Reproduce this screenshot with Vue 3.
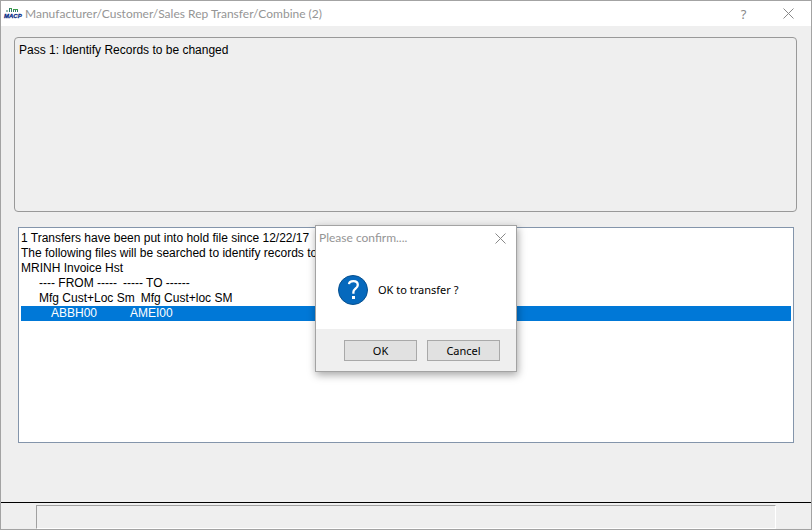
<template>
  <div class="window">
    <header class="titlebar">
      <svg class="logo" viewBox="0 0 16 12" aria-hidden="true">
        <path d="M2 3h2M5.5 0v4M7.5 1v3M9.5 1v3M11.5 1v3M13.5 1v3" stroke="#2f7a66" fill="none" />
        <path d="M6 0.5h2M9 1.5h5" stroke="#3a9c49" fill="none" />
        <text x="0" y="10">MACP</text>
      </svg>
      <h1 class="title">Manufacturer/Customer/Sales Rep Transfer/Combine (2)</h1>
      <button class="title-btn" type="button" aria-label="Help">?</button>
      <button class="title-btn" type="button" aria-label="Close">
        <svg width="11" height="11" viewBox="0 0 11 11">
          <path d="M0.5 0.5l10 10M10.5 0.5l-10 10" />
        </svg>
      </button>
    </header>

    <main class="content">
      <section class="pass-panel">Pass 1: Identify Records to be changed</section>

      <ul class="record-list" role="listbox" aria-label="Transfers">
        <li
          v-for="(row, i) in rows"
          :key="i"
          class="row"
          :class="[row.kind, { selected: i === selected }]"
          role="option"
          :aria-selected="i === selected"
          @click="selected = i"
        >
          <span v-for="cell in row.cells" :key="cell" class="cell">{{ cell }}</span>
        </li>
      </ul>
    </main>

    <footer class="statusbar">
      <div class="status-field"></div>
    </footer>

    <div v-if="confirmOpen" class="dialog" role="dialog" aria-labelledby="confirm-title">
      <div class="dialog-header">
        <h2 id="confirm-title" class="dialog-title">Please confirm....</h2>
        <button class="dialog-close" type="button" aria-label="Close" @click="confirmOpen = false">
          <svg width="11" height="11" viewBox="0 0 11 11">
            <path d="M0.5 0.5l10 10M10.5 0.5l-10 10" />
          </svg>
        </button>
      </div>
      <div class="dialog-body">
        <svg class="question" viewBox="0 0 30 30" aria-hidden="true">
          <circle cx="15" cy="15" r="14.5" fill="#0669bd" stroke="#07508f" />
          <path d="M11 9.2C11.2 7.2 12.9 6.2 15.4 6.2c2.7 0 4.4 1.4 4.4 3.7 0 3.6-4.4 4-4.4 7.2v1.7" fill="none" stroke="#fff" stroke-width="2.3" />
          <rect x="14" y="21" width="3" height="3" fill="#fff" />
        </svg>
        <p class="message">OK to transfer ?</p>
      </div>
      <div class="dialog-actions">
        <button class="btn" type="button" @click="confirmOpen = false">OK</button>
        <button class="btn" type="button" @click="confirmOpen = false">Cancel</button>
      </div>
    </div>
  </div>
</template>

<script setup>
import { ref } from 'vue'

const rows = [
  { kind: 'text', cells: ['1 Transfers have been put into hold file since 12/22/17'] },
  { kind: 'text', cells: ['The following files will be searched to identify records to'] },
  { kind: 'text', cells: ['MRINH Invoice Hst'] },
  { kind: 'heading', cells: ['---- FROM -----', '----- TO ------'] },
  { kind: 'heading', cells: ['Mfg Cust+Loc Sm', 'Mfg Cust+loc SM'] },
  { kind: 'record', cells: ['ABBH00', 'AMEI00'] }
]

const selected = ref(5)
const confirmOpen = ref(true)
</script>

<style>
body {
  margin: 0;
}
</style>

<style scoped>
.window {
  position: relative;
  box-sizing: border-box;
  min-height: 100vh;
  display: flex;
  flex-direction: column;
  border: 1px solid #a3a3a3;
  background: #efefef;
  color: #000;
  font-family: "Liberation Sans", Arial, sans-serif;
  font-size: 12px;
  line-height: 15px;
}

button {
  font-family: "Noto Sans", "Segoe UI", sans-serif;
  padding: 0;
}

.titlebar {
  display: flex;
  align-items: center;
  height: 25px;
  background: #fff;
}

.logo {
  width: 16px;
  height: 12px;
  margin: 0 5px 0 3px;
  overflow: visible;
}

.logo text {
  fill: #0b2f86;
  stroke: #0b2f86;
  stroke-width: 0.3px;
  font: italic bold 6px "Liberation Sans", Arial, sans-serif;
}

.title,
.dialog-title {
  margin: 0;
  color: #959595;
  font-family: Lato, "Segoe UI", sans-serif;
  font-size: 12px;
  font-weight: 400;
  line-height: 14px;
  white-space: nowrap;
}

.title {
  flex: 1;
}

.title-btn {
  display: flex;
  align-items: center;
  justify-content: center;
  width: 45px;
  height: 24px;
  border: none;
  background: none;
  color: #888;
  font-size: 13px;
}

.title-btn path,
.dialog-close path {
  stroke: #888;
  fill: none;
}

.content {
  flex: 1;
  padding: 11px 14px 0 13px;
}

.pass-panel {
  box-sizing: border-box;
  height: 175px;
  padding: 5px 4px;
  border: 1px solid #999;
  border-radius: 4px;
}

.record-list {
  box-sizing: border-box;
  height: 216px;
  margin: 15px 3px 0 4px;
  padding: 3px 2px;
  border: 1px solid #8495ab;
  background: #fff;
  list-style: none;
}

.row {
  display: flex;
  height: 15px;
  white-space: nowrap;
  cursor: default;
}

.row.heading {
  gap: 6px;
  padding-left: 18px;
}

.row.record {
  gap: 33px;
  padding-left: 30px;
}

.row.selected {
  background: #0078d7;
  color: #fff;
}

.statusbar {
  display: flex;
  height: 24px;
  padding: 2px 35px 0;
  border-top: 1px solid #000;
}

.status-field {
  flex: 1;
  border: 1px solid #fff;
  border-top-color: #a0a0a0;
  border-left-color: #a0a0a0;
}

.dialog {
  position: absolute;
  top: 224px;
  left: 314px;
  width: 200px;
  border: 1px solid #a3a3a3;
  background: #fff;
  box-shadow: 1px 3px 8px rgba(0, 0, 0, 0.35);
}

.dialog-header {
  display: flex;
  align-items: center;
  justify-content: space-between;
  height: 24px;
  padding-left: 3px;
}

.dialog-close {
  display: flex;
  align-items: center;
  justify-content: center;
  width: 31px;
  height: 24px;
  border: none;
  background: none;
}

.dialog-body {
  display: flex;
  align-items: center;
  gap: 10px;
  height: 79px;
  padding-left: 22px;
}

.question {
  width: 30px;
  height: 30px;
}

.message {
  margin: 0;
  font-family: "Noto Sans", "Segoe UI", sans-serif;
  font-size: 11px;
}

.dialog-actions {
  display: flex;
  justify-content: flex-end;
  gap: 10px;
  padding: 11px 16px 10px;
  background: #efefef;
}

.btn {
  width: 73px;
  height: 21px;
  border: 1px solid #a9a9a9;
  background: #e1e1e1;
  color: #000;
  font-size: 11px;
}
</style>
